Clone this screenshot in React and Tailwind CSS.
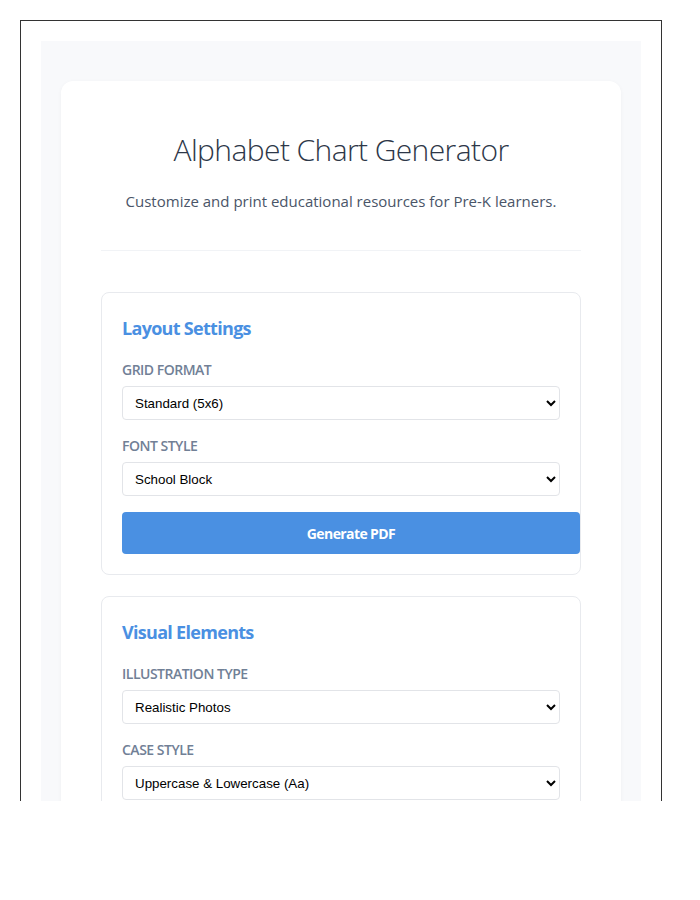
import React from "react";

const sans = { fontFamily: '"Open Sans", "Noto Sans", sans-serif' };

function Field({ label, value, options }) {
  return (
    <div className="mb-4">
      <div
        className="text-[14px] leading-5 font-semibold uppercase tracking-[-0.5px] text-[#718096] mb-[6px]"
        style={sans}
      >
        {label}
      </div>
      <select
        defaultValue={value}
        className="block w-full h-[34px] border border-[#e2e4e8] rounded-[4px] bg-white pl-[8px] pr-2 text-[13.333px] text-black"
        style={{ fontFamily: '"Liberation Sans", Arial, sans-serif' }}
      >
        {options.map((o) => (
          <option key={o}>{o}</option>
        ))}
      </select>
    </div>
  );
}

function Section({ title, children }) {
  return (
    <div className="border border-[#e8eaee] rounded-[8px] p-5 bg-white">
      <h3
        className="text-[18px] leading-[30px] font-bold tracking-[-0.7px] text-[#4a90e2] mb-[17px]"
        style={sans}
      >
        {title}
      </h3>
      {children}
    </div>
  );
}

export default function App() {
  return (
    <div className="h-[801px] overflow-hidden">
      <div className="m-5 w-[642px] border border-[#333] p-5 bg-white">
        <div className="bg-[#f8f9fb] px-5 pt-10 pb-10">
          <div className="bg-white rounded-[12px] shadow-[0_1px_4px_rgba(0,0,0,0.04)] p-10">
            <h1
              className="mt-[9px] text-center text-[30px] leading-[40px] font-light tracking-[-0.6px] text-[#2d3748]"
              style={sans}
            >
              Alphabet Chart Generator
            </h1>
            <p className="mt-[19px] text-center text-[15px] leading-6 text-[#4a5568]" style={sans}>
              Customize and print educational resources for Pre-K learners.
            </p>
            <hr className="mt-[37px] border-0 h-px bg-[#f1f3f6]" />
            <div className="mt-[41px] flex flex-col gap-[21px]">
              <Section title="Layout Settings">
                <Field
                  label="Grid Format"
                  value="Standard (5x6)"
                  options={["Standard (5x6)", "Compact (6x5)", "Large (4x7)"]}
                />
                <Field
                  label="Font Style"
                  value="School Block"
                  options={["School Block", "Manuscript", "Cursive"]}
                />
                <button
                  className="w-[458px] h-[42px] rounded-[4px] bg-[#4a90e2] text-white text-[14px] font-bold tracking-[-0.6px]"
                  style={sans}
                >
                  Generate PDF
                </button>
              </Section>
              <Section title="Visual Elements">
                <Field
                  label="Illustration Type"
                  value="Realistic Photos"
                  options={["Realistic Photos", "Cartoon Drawings", "Line Art"]}
                />
                <Field
                  label="Case Style"
                  value="Uppercase & Lowercase (Aa)"
                  options={["Uppercase & Lowercase (Aa)", "Uppercase Only (A)", "Lowercase Only (a)"]}
                />
              </Section>
            </div>
          </div>
        </div>
      </div>
    </div>
  );
}
